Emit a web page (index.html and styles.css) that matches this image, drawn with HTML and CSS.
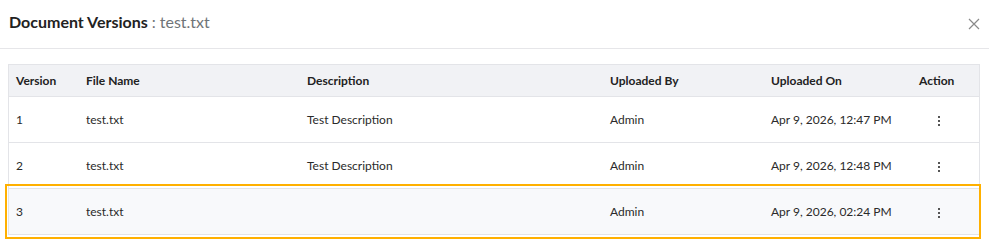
FILE: index.html
```html
<!DOCTYPE html>
<html>
<head>
  <title>Document Versions</title>
  <link rel="stylesheet" href="styles.css">
</head>
<body>
  <div class="modal">
    <div class="modal-header">
      <h2 class="modal-title">Document Versions <span class="file-name">: test.txt</span></h2>
      <button class="close-btn" aria-label="Close">
        <svg width="12" height="12" viewBox="0 0 12 12"><path d="M1 1 L11 11 M11 1 L1 11" stroke="#8a8a8a" stroke-width="1.2" fill="none"/></svg>
      </button>
    </div>
    <div class="modal-body">
      <table class="versions-table">
        <thead>
          <tr>
            <th class="col-version">Version</th>
            <th class="col-file">File Name</th>
            <th class="col-desc">Description</th>
            <th class="col-by">Uploaded By</th>
            <th class="col-on">Uploaded On</th>
            <th class="col-action">Action</th>
          </tr>
        </thead>
        <tbody>
          <tr>
            <td>1</td>
            <td>test.txt</td>
            <td>Test Description</td>
            <td>Admin</td>
            <td>Apr 9, 2026, 12:47 PM</td>
            <td><span class="kebab"><i></i><i></i><i></i></span></td>
          </tr>
          <tr>
            <td>2</td>
            <td>test.txt</td>
            <td>Test Description</td>
            <td>Admin</td>
            <td>Apr 9, 2026, 12:48 PM</td>
            <td><span class="kebab"><i></i><i></i><i></i></span></td>
          </tr>
          <tr class="selected">
            <td>3</td>
            <td>test.txt</td>
            <td></td>
            <td>Admin</td>
            <td>Apr 9, 2026, 02:24 PM</td>
            <td><span class="kebab"><i></i><i></i><i></i></span></td>
          </tr>
        </tbody>
      </table>
    </div>
  </div>
</body>
</html>
```

FILE: styles.css
```css
body {
  margin: 0;
  font-family: Lato, "Open Sans", sans-serif;
  background-color: #fff;
  color: #222;
}

.modal {
  width: 989px;
}

.modal-header {
  display: flex;
  align-items: center;
  justify-content: space-between;
  height: 48px;
  padding: 0 9px;
  border-bottom: 1px solid #e6e6e9;
}

.modal-title {
  margin: 0;
  font-size: 16px;
  font-weight: bold;
  color: #222;
  line-height: 20px;
  padding-bottom: 4px;
}

.modal-title .file-name {
  font-weight: normal;
  color: #6f7478;
}

.close-btn {
  border: none;
  background: none;
  padding: 0;
  width: 12px;
  height: 12px;
  display: flex;
  cursor: pointer;
}

.modal-body {
  padding: 15px 9px 12px 8px;
}

.versions-table {
  width: 100%;
  border-collapse: collapse;
  border: 1px solid #e3e4e8;
  font-size: 12px;
}

.versions-table th {
  text-align: left;
  font-weight: bold;
  background-color: #f1f2f5;
  height: 31px;
  padding: 0 7px;
  border-bottom: 1px solid #e3e4e8;
  color: #222;
}

.versions-table td {
  height: 45px;
  padding: 0 7px;
  border-bottom: 1px solid #e3e4e8;
  color: #2a2a2a;
}

.col-version { width: 56px; }
.col-file { width: 207px; }
.col-desc { width: 289px; }
.col-by { width: 147px; }
.col-on { width: 134px; }

.versions-table tr.selected td {
  background-color: #f8f9fb;
}

/* highlight frame drawn over the selected row */
.versions-table tr.selected td:first-child {
  position: relative;
}

.versions-table tr.selected td:first-child::after {
  content: "";
  position: absolute;
  top: -5px;
  bottom: -5px;
  left: -4px;
  width: 972px;
  border: 2px solid #ffb000;
  pointer-events: none;
}

.kebab {
  display: inline-flex;
  flex-direction: column;
  gap: 2px;
  margin-left: 19px;
  vertical-align: middle;
}

.kebab i {
  display: block;
  width: 2px;
  height: 2px;
  background-color: #555;
}
```
